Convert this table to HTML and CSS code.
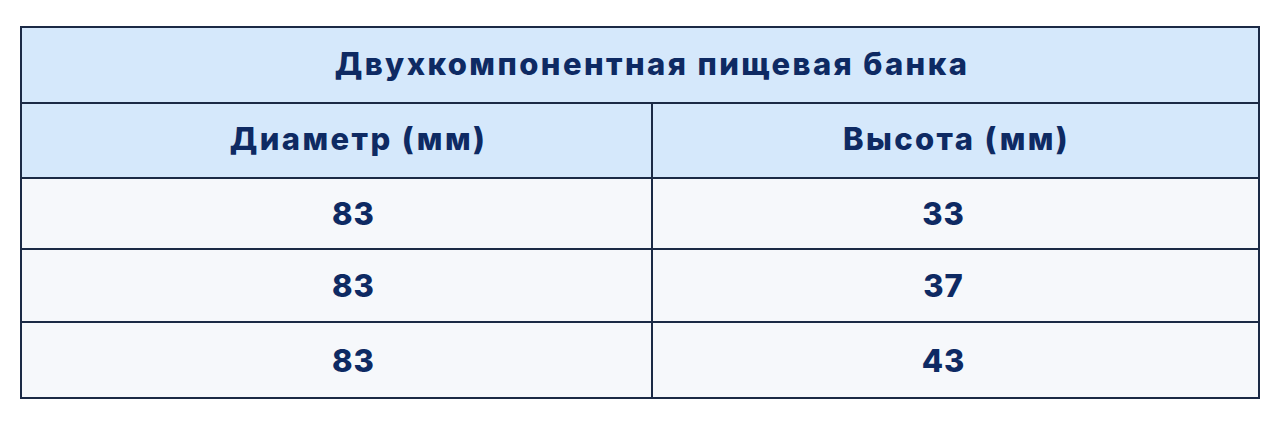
FILE: index.html
```html
<!DOCTYPE html>
<html lang="ru">
<head>
<meta charset="utf-8">
<link rel="stylesheet" href="styles.css">
</head>
<body>
<table class="spec">
  <colgroup><col class="col1"><col class="col2"></colgroup>
  <thead>
    <tr class="title-row"><th colspan="2" class="title">Двухкомпонентная пищевая банка</th></tr>
    <tr class="head-row"><th class="c1">Диаметр (мм)</th><th class="c2">Высота (мм)</th></tr>
  </thead>
  <tbody>
    <tr class="r-a"><td class="c1">83</td><td class="c2">33</td></tr>
    <tr class="r-b"><td class="c1">83</td><td class="c2">37</td></tr>
    <tr class="r-c"><td class="c1">83</td><td class="c2">43</td></tr>
  </tbody>
</table>
</body>
</html>
```
FILE: styles.css
```css
html, body {
  margin: 0;
  padding: 0;
  background: #ffffff;
}
body {
  padding: 26px 0 0 20px;
  font-family: "Inter", "Noto Sans", sans-serif;
  color: #0e2a63;
}
.spec {
  width: 1238px;
  border-collapse: collapse;
  border: 2px solid #1b2a45;
  table-layout: fixed;
}
.col1 { width: 631px; }
.col2 { width: 607px; }
.spec th, .spec td {
  border: 2px solid #1b2a45;
  text-align: center;
  vertical-align: middle;
  font-weight: 800;
  font-size: 31px;
  line-height: 1;
  padding: 0;
}
.spec th {
  background: #d5e8fb;
  letter-spacing: 2.4px;
  padding-bottom: 4px;
}
.spec td {
  background: #f6f8fb;
  letter-spacing: 1px;
}
.spec th.c1 { padding-left: 44px; }
.spec th.c2 { padding-left: 2px; }
.spec td.c1 { padding-left: 34px; }
.spec td.c2 { padding-right: 24px; }
.title { padding-left: 24px !important; }
.title-row { height: 76px; }
.head-row { height: 75px; }
.r-a { height: 71px; }
.r-b { height: 73px; }
.r-c { height: 76px; }
```
